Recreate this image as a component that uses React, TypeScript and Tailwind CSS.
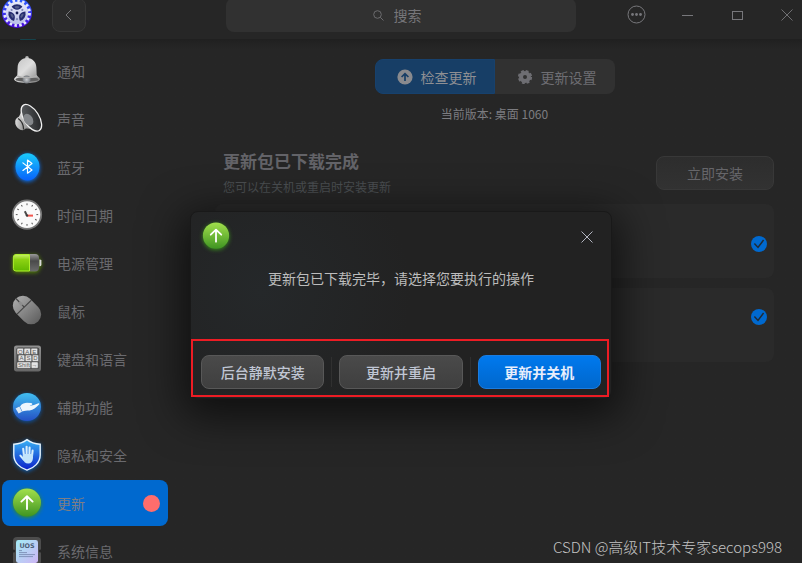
import type { ReactNode } from "react";

const FONT = "font-['Noto_Sans_CJK_SC','Noto_Sans',sans-serif]";

function LogoIcon() {
  const arms = [0, 120, 240];
  return (
    <svg width="30" height="30" viewBox="0 0 30 30" aria-hidden="true">
      <defs>
        <linearGradient id="logoBg" x1="0" y1="0" x2="0" y2="1">
          <stop offset="0" stopColor="#2b62ff" />
          <stop offset="1" stopColor="#4a08d8" />
        </linearGradient>
        <linearGradient id="logoGear" x1="0" y1="0" x2="0" y2="1">
          <stop offset="0" stopColor="#e9ebfa" />
          <stop offset="1" stopColor="#b9bfe8" />
        </linearGradient>
      </defs>
      <circle cx="15" cy="15" r="15" fill="url(#logoBg)" />
      <circle cx="15" cy="15" r="12.4" fill="none" stroke="#e6e8fa" strokeWidth="3" strokeDasharray="2.5 2.37" />
      <circle cx="15" cy="15" r="11.2" fill="url(#logoGear)" />
      {arms.map((a) => (
        <g key={a} transform={`rotate(${a} 15 15)`}>
          <path d="M15 11.8 C12.8 11.8 10.6 10 9.6 8.4 Q12 6.2 15 6.2 Q18 6.2 20.4 8.4 C19.4 10 17.2 11.8 15 11.8Z" fill="#262c70" />
          <path d="M12.4 8.8 Q15 7.4 17.6 8.8 L16.4 10.4 H13.6Z" fill="#56608c" />
          <circle cx="15" cy="21.2" r="1.1" fill="#8088b8" />
        </g>
      ))}
      <circle cx="15" cy="15" r="1.4" fill="#141a54" />
    </svg>
  );
}

function BellIcon() {
  return (
    <svg width="32" height="32" viewBox="0 0 32 32" aria-hidden="true">
      <defs>
        <linearGradient id="bellBody" x1="0" y1="0" x2="1" y2="1">
          <stop offset="0" stopColor="#c2c2c2" />
          <stop offset="0.45" stopColor="#dedede" />
          <stop offset="1" stopColor="#7b7b7b" />
        </linearGradient>
        <radialGradient id="bellBall">
          <stop offset="0" stopColor="#c9ccd0" />
          <stop offset="1" stopColor="#75797e" />
        </radialGradient>
      </defs>
      <circle cx="16" cy="2.8" r="1.8" fill="#b5b5b5" />
      <path d="M16 2.8 C10 3.4 6.8 7.4 6.6 12.4 L6.3 20 C6 21.6 3.2 22.4 3 24.2 C4 27 10 28 16 28 C22 28 28 27 29 24.2 C28.8 22.4 26 21.6 25.7 20 L25.4 12.4 C25.2 7.4 22 3.4 16 2.8Z" fill="url(#bellBody)" />
      <ellipse cx="16" cy="24.4" rx="11.6" ry="2.4" fill="#5f5f5f" />
      <circle cx="15.6" cy="24.6" r="4" fill="url(#bellBall)" />
      <path d="M6.2 20.2 Q16 24 25.8 20.2 L26.6 21.8 Q16 25.2 5.4 21.8Z" fill="#b0b0b0" />
    </svg>
  );
}

function SpeakerIcon() {
  return (
    <svg width="32" height="32" viewBox="0 0 32 32" aria-hidden="true">
      <defs>
        <linearGradient id="spkBody" x1="0" y1="0" x2="1" y2="1">
          <stop offset="0" stopColor="#f0f0f0" />
          <stop offset="1" stopColor="#6b6b6b" />
        </linearGradient>
        <linearGradient id="spkCone" x1="0" y1="0" x2="1" y2="1">
          <stop offset="0" stopColor="#606366" />
          <stop offset="1" stopColor="#1d1e20" />
        </linearGradient>
      </defs>
      <ellipse cx="10" cy="20.5" rx="5.4" ry="7" transform="rotate(-30 10 20.5)" fill="url(#spkBody)" />
      <path d="M11.5 2.5 C10.5 8 9.5 12 6.6 15.6 C9 17.5 12.5 21 12.6 26 C17 24.5 21 26.5 26 28.8 Z" fill="url(#spkBody)" />
      <path d="M7.2 15.6 Q12.6 19.4 12.6 26.6" fill="none" stroke="#303030" strokeWidth="1.2" />
      <ellipse cx="20.4" cy="14.8" rx="7.6" ry="15" transform="rotate(-32 20.4 14.8)" fill="url(#spkCone)" stroke="#f1f1f1" strokeWidth="1.3" />
      <ellipse cx="17.4" cy="16.6" rx="4.4" ry="6.2" transform="rotate(-32 17.4 16.6)" fill="#84878b" />
    </svg>
  );
}

function BluetoothIcon() {
  return (
    <svg width="32" height="32" viewBox="0 0 32 32" className="drop-shadow-[0_1px_2px_#0a78ff]" aria-hidden="true">
      <defs>
        <linearGradient id="btBg" x1="0" y1="0" x2="0" y2="1">
          <stop offset="0" stopColor="#19cbfb" />
          <stop offset="1" stopColor="#0862fb" />
        </linearGradient>
      </defs>
      <ellipse cx="16.5" cy="15.8" rx="12" ry="13.6" fill="url(#btBg)" />
      <path d="M11.9 11.9 L21 19 L16.5 22.2 V9 L21 12.4 L11.9 19.4" fill="none" stroke="#fff" strokeWidth="1.2" strokeLinejoin="round" strokeLinecap="round" />
    </svg>
  );
}

function ClockIcon() {
  const ticks = Array.from({ length: 12 }, (_, i) => i * 30);
  return (
    <svg width="32" height="32" viewBox="0 0 32 32" aria-hidden="true">
      <circle cx="16" cy="15.6" r="14.2" fill="#fafafa" stroke="#777" strokeWidth="1.8" />
      {ticks.map((a) => (
        <path key={a} d="M16 4.4 V6.2" stroke="#555" strokeWidth="1" transform={`rotate(${a} 16 15.6)`} />
      ))}
      <path d="M16 16.6 H22" stroke="#f3564e" strokeWidth="2" />
      <path d="M16 16.6 L13.8 12.2" stroke="#4c4c4c" strokeWidth="2" />
      <circle cx="16" cy="16.6" r="1.2" fill="#3c3c3c" />
    </svg>
  );
}

function BatteryIcon() {
  return (
    <svg width="32" height="32" viewBox="0 0 32 32" className="drop-shadow-[0_1px_2px_#5a8f00]" aria-hidden="true">
      <defs>
        <linearGradient id="batG" x1="0" y1="0" x2="0" y2="1">
          <stop offset="0" stopColor="#c8f06a" />
          <stop offset="0.3" stopColor="#8ed313" />
          <stop offset="1" stopColor="#62b800" />
        </linearGradient>
        <linearGradient id="batD" x1="0" y1="0" x2="0" y2="1">
          <stop offset="0" stopColor="#9a9a9a" />
          <stop offset="0.4" stopColor="#4a4a4a" />
          <stop offset="1" stopColor="#6c6c6c" />
        </linearGradient>
      </defs>
      <path d="M19 7 H24 Q28 7 28 11 V20.5 Q28 24.5 24 24.5 H19Z" fill="url(#batD)" />
      <path d="M28.4 12.4 Q30.4 12.4 30.4 13.6 V18 Q30.4 19.2 28.4 19.2Z" fill="#d8d8d8" />
      <path d="M5 7.5 H18.5 V24 H5 Q2.4 24 2.4 21.5 V10 Q2.4 7.5 5 7.5Z" fill="url(#batG)" stroke="#aef02e" />
    </svg>
  );
}

function MouseIcon() {
  return (
    <svg width="32" height="32" viewBox="0 0 32 32" aria-hidden="true">
      <defs>
        <linearGradient id="mouseG" x1="0" y1="0" x2="0" y2="1">
          <stop offset="0" stopColor="#a8a8a8" />
          <stop offset="1" stopColor="#626262" />
        </linearGradient>
      </defs>
      <g transform="rotate(-44 16 15)">
        <rect x="6" y="-1" width="20" height="32" rx="10" fill="url(#mouseG)" />
        <path d="M6 11 H26" fill="none" stroke="#444" strokeWidth="1.2" />
        <path d="M16 -1 V11" stroke="#444" strokeWidth="1.2" />
        <rect x="14.6" y="3.4" width="2.8" height="5" rx="1.4" fill="#8d8d8d" />
      </g>
    </svg>
  );
}

function KeyboardIcon() {
  const key = { fill: "#e4e4e4", stroke: "#4a4a4a", strokeWidth: 0.5 };
  return (
    <svg width="32" height="32" viewBox="0 0 32 32" aria-hidden="true">
      <defs>
        <linearGradient id="kbG" x1="0" y1="0" x2="0" y2="1">
          <stop offset="0" stopColor="#929292" />
          <stop offset="1" stopColor="#676767" />
        </linearGradient>
      </defs>
      <rect x="3" y="2.4" width="27" height="26" rx="2.6" fill="url(#kbG)" />
      <rect x="5.4" y="4.6" width="22.8" height="21.4" rx="1.6" fill="#505050" />
      <rect x="6" y="5.2" width="6.6" height="6.4" rx="1" {...key} />
      <rect x="13" y="5.2" width="6.6" height="6.4" rx="1" {...key} />
      <rect x="20" y="5.2" width="6.6" height="6.4" rx="1" {...key} />
      <rect x="7.2" y="12" width="6.6" height="6.4" rx="1" {...key} />
      <rect x="14.2" y="12" width="6.6" height="6.4" rx="1" {...key} />
      <rect x="21.2" y="12" width="6.4" height="6.4" rx="1" {...key} />
      <rect x="6" y="18.9" width="13.8" height="6.4" rx="1" {...key} />
      <rect x="20.2" y="18.9" width="7" height="6.4" rx="1" {...key} />
      <g fontFamily="Liberation Sans, sans-serif" fontSize="6" fill="#5c5c5c">
        <text x="7" y="10.5">Q</text>
        <text x="14.2" y="10.5">A</text>
        <text x="21.2" y="10.5">E</text>
        <text x="8.4" y="17.4">A</text>
        <text x="15.4" y="17.4">S</text>
        <text x="22.2" y="17.4">D</text>
        <text x="7" y="24.3">Shift</text>
        <text x="20.6" y="24.3">→</text>
      </g>
    </svg>
  );
}

function HandIcon() {
  return (
    <svg width="32" height="32" viewBox="0 0 32 32" className="drop-shadow-[0_1px_2px_#0c56a8]" aria-hidden="true">
      <defs>
        <linearGradient id="handBg" x1="0" y1="0" x2="0" y2="1">
          <stop offset="0" stopColor="#41bff2" />
          <stop offset="1" stopColor="#2450c4" />
        </linearGradient>
      </defs>
      <circle cx="16" cy="16" r="14" fill="url(#handBg)" />
      <path d="M4.6 17.4 L8.4 15.6 L11 20.8 L7.6 22.6Z" fill="#dbeaf8" />
      <path d="M9 15.4 C11 12.6 13.6 11.8 16 11.8 L20.2 12 C21.8 12.4 21.6 13.8 20.2 14 L18.6 14.3 C21.6 15 24 13.6 27.4 12.2 C28.6 12 28.6 13 27.8 13.8 C25 16.6 22.4 19 18.6 19.4 C15.4 19.6 13.6 19.4 11.4 20.4Z" fill="#eef6fd" />
    </svg>
  );
}

function ShieldIcon() {
  return (
    <svg width="32" height="34" viewBox="0 0 32 34" className="drop-shadow-[0_1px_2px_#0a5fb8]" aria-hidden="true">
      <defs>
        <linearGradient id="shBg" x1="0" y1="0" x2="0" y2="1">
          <stop offset="0" stopColor="#38b2f4" />
          <stop offset="1" stopColor="#0b20c9" />
        </linearGradient>
      </defs>
      <path d="M16 1.6 C20 4.8 25 6 29.2 6.2 V17 C29.2 24.6 23 30 16 32.2 C9 30 2.8 24.6 2.8 17 V6.2 C7 6 12 4.8 16 1.6Z" fill="url(#shBg)" stroke="#e6f3fc" strokeWidth="1.4" />
      <g stroke="#d6eefd" strokeWidth="2.1" strokeLinecap="round" fill="none">
        <path d="M13 18 L12.2 10.8" />
        <path d="M15.6 17 V8.8" />
        <path d="M18.4 17 L18.6 9.6" />
        <path d="M21 18 L21.6 12.6" />
        <path d="M12.8 21.6 L9.4 17.6" />
      </g>
      <path d="M12 16 H22 V20 C21.8 23.4 20.2 25.6 17.2 25.6 C14.2 25.6 12.8 23.4 11.4 20.8Z" fill="#c2e4fb" />
    </svg>
  );
}

function UpdateIcon({ size }: { size: number }) {
  return (
    <svg width={size} height={size} viewBox="0 0 32 32" className="drop-shadow-[0_1px_2px_#3a8f1c]" aria-hidden="true">
      <defs>
        <linearGradient id="upBg" x1="0" y1="0" x2="0" y2="1">
          <stop offset="0" stopColor="#a2e04c" />
          <stop offset="1" stopColor="#3f9422" />
        </linearGradient>
      </defs>
      <circle cx="16" cy="15.6" r="14" fill="url(#upBg)" />
      <path d="M16 22 V9.6 M10.4 14.6 L16 9.2 L21.6 14.6" fill="none" stroke="#fff" strokeWidth="1.9" strokeLinecap="round" strokeLinejoin="round" />
    </svg>
  );
}

function SystemIcon() {
  return (
    <svg width="32" height="32" viewBox="0 0 32 32" aria-hidden="true">
      <defs>
        <linearGradient id="sysBg" x1="0" y1="0" x2="1" y2="1">
          <stop offset="0" stopColor="#a4ecf6" />
          <stop offset="1" stopColor="#cdb4f4" />
        </linearGradient>
      </defs>
      <rect x="2" y="2" width="28" height="28" rx="4" fill="#4c4c4c" />
      <circle cx="2.6" cy="16" r="1.6" fill="#262626" />
      <circle cx="29.4" cy="16" r="1.6" fill="#262626" />
      <rect x="5" y="5" width="22" height="23" rx="2.4" fill="url(#sysBg)" />
      <text x="8.4" y="13" fontFamily="DejaVu Sans, sans-serif" fontSize="6.4" fontWeight="700" fill="#4d6078">
        UOS
      </text>
      <path d="M8 15.6 H11 M8 17.6 H16 M8 19.6 H24 M8 21.6 H22" stroke="#7c8cb4" strokeWidth="0.9" />
    </svg>
  );
}

type NavItem = { label: string; icon: ReactNode; active?: boolean };

const NAV: NavItem[] = [
  { label: "通知", icon: <BellIcon /> },
  { label: "声音", icon: <SpeakerIcon /> },
  { label: "蓝牙", icon: <BluetoothIcon /> },
  { label: "时间日期", icon: <ClockIcon /> },
  { label: "电源管理", icon: <BatteryIcon /> },
  { label: "鼠标", icon: <MouseIcon /> },
  { label: "键盘和语言", icon: <KeyboardIcon /> },
  { label: "辅助功能", icon: <HandIcon /> },
  { label: "隐私和安全", icon: <ShieldIcon /> },
  { label: "更新", icon: <UpdateIcon size={32} />, active: true },
  { label: "系统信息", icon: <SystemIcon /> },
];

function Header() {
  return (
    <header className="grid h-[39px] shrink-0 grid-cols-[1fr_350px_1fr] content-end bg-[#262626] pb-[7px]">
      <div className="flex items-start gap-5 pl-0.5">
        <LogoIcon />
        <button type="button" aria-label="返回" className="flex h-[34px] w-[34px] items-center justify-center rounded-lg border border-[#363636] bg-[#2b2b2b]">
          <svg width="8" height="12" viewBox="0 0 8 12" fill="none" stroke="#77777a" aria-hidden="true">
            <path d="M6 1 L1 6 L6 11" />
          </svg>
        </button>
      </div>
      <label className="flex h-[34px] items-center justify-center gap-2.5 rounded-lg bg-[#313131]">
        <svg width="11" height="11" viewBox="0 0 11 11" fill="none" stroke="#6b6b6e" aria-hidden="true">
          <circle cx="4.5" cy="4.5" r="3.8" />
          <path d="M7.3 7.3 L10.5 10.5" />
        </svg>
        <input type="text" aria-label="搜索" placeholder="搜索" className="w-9 bg-transparent text-sm text-[#76767a] outline-none placeholder:text-[#76767a]" />
      </label>
      <div className="flex h-[34px] items-center justify-end gap-[30px] pr-[5px] text-[#77777b]">
        <button type="button" aria-label="菜单" className="flex w-5 justify-center">
          <svg width="20" height="20" viewBox="0 0 20 20" fill="none" stroke="currentColor" aria-hidden="true">
            <circle cx="9.5" cy="9.5" r="8.5" />
            <g fill="currentColor" stroke="none">
              <circle cx="5.5" cy="9.5" r="1.4" />
              <circle cx="9.5" cy="9.5" r="1.4" />
              <circle cx="13.5" cy="9.5" r="1.4" />
            </g>
          </svg>
        </button>
        <button type="button" aria-label="最小化" className="flex w-5 justify-center">
          <svg width="12" height="12" viewBox="0 0 12 12" stroke="currentColor" aria-hidden="true">
            <path d="M1 6.5 H12" />
          </svg>
        </button>
        <button type="button" aria-label="最大化" className="flex w-5 justify-center">
          <svg width="12" height="12" viewBox="0 0 12 12" fill="none" stroke="currentColor" aria-hidden="true">
            <rect x="1.5" y="2.5" width="10" height="8" />
          </svg>
        </button>
        <button type="button" aria-label="关闭" className="flex w-5 justify-center">
          <svg width="12" height="12" viewBox="0 0 12 12" stroke="currentColor" strokeWidth="0.9" aria-hidden="true">
            <path d="M0.5 0.5 L11.5 11.5 M11.5 0.5 L0.5 11.5" />
          </svg>
        </button>
      </div>
    </header>
  );
}

function Sidebar() {
  return (
    <nav className="relative w-[187px] shrink-0 overflow-hidden">
      <ul className="flex flex-col gap-0.5 pt-[9px] pr-[19px] pl-0.5">
        {NAV.map((item) => (
          <li key={item.label}>
            <a
              href="#"
              className={
                item.active
                  ? "flex h-[46px] items-center rounded-lg bg-[#0069cf] pr-2 pl-[9px] text-sm text-[#7f7e84]"
                  : "flex h-[46px] items-center rounded-lg pr-2 pl-[9px] text-sm text-[#6a6a6e]"
              }
            >
              <span className="flex w-8 justify-center">{item.icon}</span>
              <span className="ml-3.5">{item.label}</span>
              {item.active && <span className="ml-auto size-[17px] rounded-full bg-[#ff6d6c]" />}
            </a>
          </li>
        ))}
      </ul>
      <span className="absolute top-0 left-5 h-px w-4 rounded-full bg-[#15424b]" />
    </nav>
  );
}

function UpdateCard({ label, className }: { label: string; className: string }) {
  return (
    <li className={className}>
      <label className="relative size-4">
        <input type="checkbox" defaultChecked aria-label={label} className="block size-4 appearance-none rounded-full bg-[#0069cf]" />
        <svg width="16" height="16" viewBox="0 0 16 16" className="pointer-events-none absolute inset-0" fill="none" stroke="#1f2a35" strokeWidth="1.5" aria-hidden="true">
          <path d="M3.4 7.6 L7 11.4 L12.6 4" />
        </svg>
      </label>
    </li>
  );
}

function Content() {
  return (
    <main className="min-w-0 flex-1 px-7 pt-5">
      <div className="flex justify-center text-sm">
        <button type="button" className="flex h-[35px] w-[120px] items-center justify-center gap-2 rounded-l-lg border border-[#17416d] bg-[#173e66] pl-1 text-[#8e8f93]">
          <svg width="16" height="16" viewBox="0 0 16 16" aria-hidden="true">
            <circle cx="8" cy="8" r="7.6" fill="#898a8e" />
            <path d="M8 12 V5 M4.6 8 L8 4.6 L11.4 8" fill="none" stroke="#173e66" strokeWidth="1.7" />
          </svg>
          检查更新
        </button>
        <button type="button" className="flex h-[35px] w-[120px] items-center justify-center gap-2 rounded-r-lg bg-[#313131] pl-1 text-[#6e6e73]">
          <svg width="16" height="16" viewBox="0 0 16 16" aria-hidden="true">
            <circle cx="8" cy="8" r="4" fill="none" stroke="#6e6e73" strokeWidth="4" />
            <circle cx="8" cy="8" r="6.2" fill="none" stroke="#6e6e73" strokeWidth="1.8" strokeDasharray="2.9 1.97" />
          </svg>
          更新设置
        </button>
      </div>
      <p className="mt-[11px] text-center text-xs leading-[18px] text-[#7c7c80]">当前版本: 桌面 1060</p>
      <section className="mt-[27px]">
        <div className="flex items-start justify-between pt-1.5 pl-2">
          <div className="-mt-2">
            <h1 className="text-[17px] leading-[26px] font-bold text-[#636368]">更新包已下载完成</h1>
            <p className="text-xs leading-[26px] text-[#4a4e51]">您可以在关机或重启时安装更新</p>
          </div>
          <button type="button" className="h-[34px] w-[118px] rounded-lg border border-[#383838] bg-linear-to-b from-[#2d2d2d] to-[#323232] text-sm text-[#66666a]">
            立即安装
          </button>
        </div>
        <ul className="mt-1 flex flex-col gap-2.5">
          <UpdateCard label="系统更新" className="flex h-[74px] justify-end rounded-lg bg-[#2a2a2a] pt-8 pr-[7px]" />
          <UpdateCard label="安全更新" className="flex h-[74px] justify-end rounded-lg bg-[#2a2a2a] pt-[21px] pr-[7px]" />
        </ul>
      </section>
    </main>
  );
}

function UpdateDialog() {
  const plain = "h-[34px] flex-1 rounded-lg border border-[#585858] bg-linear-to-b from-[#4a4a4a] to-[#3f3f3f] text-sm font-medium text-[#c0c6d4]";
  return (
    <div className="absolute inset-0 flex items-start justify-center pt-[211px]">
      <div
        role="dialog"
        aria-label="更新"
        className="relative w-[422px] rounded-lg border border-[#191919] bg-[#222222] bg-[radial-gradient(circle_at_70px_80px,#25282a,#222222_150px)] px-2.5 pt-[9px] pb-[9px] shadow-[0_10px_42px_8px_rgba(0,0,0,0.6)]"
      >
        <div className="flex items-start justify-between">
          <UpdateIcon size={30} />
          <button type="button" aria-label="关闭对话框" className="mt-2.5 mr-2 text-[#c3c6d2]">
            <svg width="12" height="12" viewBox="0 0 12 12" stroke="currentColor" strokeWidth="0.9" aria-hidden="true">
              <path d="M0.5 0.5 L11.5 11.5 M11.5 0.5 L0.5 11.5" />
            </svg>
          </button>
        </div>
        <p className="mt-4 text-center text-sm leading-[22px] text-[#bcbcbc]">更新包已下载完毕，请选择您要执行的操作</p>
        <div className="mt-[66px] flex items-center gap-[7px]">
          <button type="button" className={plain}>后台静默安装</button>
          <span className="h-[30px] w-px bg-[#303030]" />
          <button type="button" className={plain}>更新并重启</button>
          <span className="h-[30px] w-px bg-[#303030]" />
          <button type="button" className="h-[34px] flex-1 rounded-lg border border-[#1b7cdf] bg-linear-to-b from-[#0079ee] to-[#0067cc] text-sm font-bold text-[#e8eefc]">
            更新并关机
          </button>
        </div>
        <div className="pointer-events-none absolute right-0.5 bottom-px left-0 h-[58px] border-2 border-[#ed1c24]" />
      </div>
    </div>
  );
}

export default function App() {
  return (
    <div className={`relative flex h-screen flex-col overflow-hidden bg-[#262626] ${FONT}`}>
      <Header />
      <div className="flex min-h-0 flex-1 bg-linear-to-b from-[#202020] to-[#262626] to-[10px]">
        <Sidebar />
        <Content />
      </div>
      <UpdateDialog />
      <p className="absolute right-5 bottom-1 text-[15px] leading-6 font-light text-[#c4c4c4]">CSDN @高级IT技术专家secops998</p>
    </div>
  );
}
